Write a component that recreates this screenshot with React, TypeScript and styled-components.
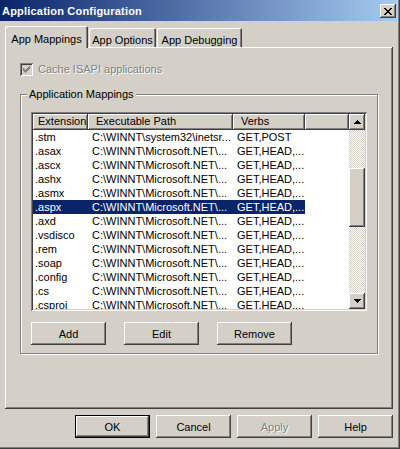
import React from "react";
import styled, { createGlobalStyle, css } from "styled-components";

const GlobalStyle = createGlobalStyle`
  html, body { margin: 0; padding: 0; background: #d4d0c8; }
  body { font-family: "Liberation Sans", Arial, sans-serif; font-size: 11px; color: #000; }
  * { box-sizing: border-box; }
`;

const raised = css`
  box-shadow: inset -1px -1px #404040, inset 1px 1px #fff, inset -2px -2px #808080;
`;

const sunken = css`
  box-shadow: inset 1px 1px #808080, inset -1px -1px #fff, inset 2px 2px #404040,
    inset -2px -2px #d4d0c8;
`;

const Window = styled.div`
  width: 400px;
  height: 449px;
  display: flex;
  flex-direction: column;
  background: #d4d0c8;
  padding-right: 3px;
  box-shadow: inset -1px -1px #404040, inset -2px -2px #808080;
`;

const TitleBar = styled.div`
  height: 21px;
  flex: none;
  display: flex;
  justify-content: space-between;
  align-items: flex-start;
  padding: 4px 1px 0 2px;
  background: linear-gradient(to right, #0a246a, #a6caf0);
`;

const TitleText = styled.span`
  color: #fff;
  font-weight: bold;
  font-size: 11px;
  line-height: 13px;
  letter-spacing: 0.2px;
  margin-top: 1px;
`;

const CloseButton = styled.div`
  width: 16px;
  height: 14px;
  display: flex;
  align-items: center;
  justify-content: center;
  background: #d4d0c8;
  ${raised}
`;

const Body = styled.div`
  flex: 1;
  display: flex;
  flex-direction: column;
  padding: 0 4px 0 5px;
`;

const TabStrip = styled.div`
  margin-top: 5px;
  height: 21px;
  display: flex;
  align-items: flex-end;
`;

const Tab = styled.div<{ $active?: boolean; $w: number }>`
  position: relative;
  z-index: ${(p) => (p.$active ? 2 : 1)};
  width: ${(p) => p.$w}px;
  height: ${(p) => (p.$active ? 22 : 19)}px;
  margin-bottom: ${(p) => (p.$active ? -1 : 0)}px;
  margin-left: ${(p) => (p.$active ? 0 : 1)}px;
  padding-top: ${(p) => (p.$active ? 7 : 6)}px;
  line-height: 13px;
  text-align: center;
  white-space: nowrap;
  background: #d4d0c8;
  border-radius: 2px 2px 0 0;
  box-shadow: inset 1px 1px #fff, inset -1px 0 #404040, inset -2px 0 #808080;
`;

const Panel = styled.div`
  flex: 1;
  display: flex;
  flex-direction: column;
  padding: 16px 15px 0 15px;
  ${raised}
`;

const CheckRow = styled.div`
  display: flex;
  align-items: center;
  gap: 5px;
  height: 13px;
`;

const CheckBox = styled.div`
  width: 13px;
  height: 13px;
  display: flex;
  align-items: center;
  justify-content: center;
  background: #d4d0c8;
  ${sunken}
`;

const DisabledText = styled.span`
  color: #808080;
  text-shadow: 1px 1px #fff;
  line-height: 13px;
`;

const GroupBox = styled.fieldset`
  margin: 12px 0 0 0;
  padding: 11px 10px 8px 10px;
  min-width: 0;
  border: 1px solid #808080;
  box-shadow: 1px 1px 0 #fff, inset 1px 1px 0 #fff;
`;

const GroupLabel = styled.legend`
  margin-left: -4px;
  padding: 0 2px;
  line-height: 13px;
  background: #d4d0c8;
`;

const ListView = styled.div`
  height: 199px;
  display: flex;
  padding: 2px;
  background: #fff;
  ${sunken}
`;

const TableArea = styled.div`
  flex: 1;
  min-width: 0;
  overflow: hidden;
  display: flex;
  flex-direction: column;
`;

const HeaderRow = styled.div`
  display: flex;
  height: 16px;
  flex: none;
`;

const HeaderCell = styled.div<{ $w?: number }>`
  ${(p) => (p.$w ? `width: ${p.$w}px; flex: none;` : "flex: 1;")}
  height: 16px;
  padding-left: ${(p) => (p.$w === 55 ? 5 : 8)}px;
  line-height: 15px;
  white-space: nowrap;
  overflow: hidden;
  background: #d4d0c8;
  ${raised}
`;

const Row = styled.div<{ $selected?: boolean }>`
  display: flex;
  width: 272px;
  height: 14px;
  flex: none;
  line-height: 14px;
  background: ${(p) => (p.$selected ? "#0a246a" : "transparent")};
  color: ${(p) => (p.$selected ? "#fff" : "#000")};
`;

const Cell = styled.div<{ $w: number; $first?: boolean }>`
  width: ${(p) => p.$w}px;
  flex: none;
  padding-left: ${(p) => (p.$first ? 2 : 4)}px;
  white-space: nowrap;
  overflow: hidden;
`;

const ScrollBar = styled.div`
  width: 16px;
  flex: none;
  display: flex;
  flex-direction: column;
`;

const ScrollButton = styled.div`
  width: 16px;
  height: 16px;
  flex: none;
  display: flex;
  align-items: center;
  justify-content: center;
  background: #d4d0c8;
  ${raised}
`;

const Track = styled.div`
  flex: 1;
  display: flex;
  flex-direction: column;
  background: repeating-conic-gradient(#d4d0c8 0% 25%, #fff 0% 50%) 0 0 / 2px 2px;
`;

const ThumbSpacer = styled.div<{ $h: number }>`
  height: ${(p) => p.$h}px;
  flex: none;
`;

const Thumb = styled.div<{ $h: number }>`
  height: ${(p) => p.$h}px;
  flex: none;
  background: #d4d0c8;
  ${raised}
`;

const ButtonRow = styled.div<{ $end?: boolean; $top?: number }>`
  display: flex;
  justify-content: ${(p) => (p.$end ? "flex-end" : "flex-start")};
  gap: ${(p) => (p.$end ? 6 : 18)}px;
  margin-top: ${(p) => p.$top ?? 0}px;
`;

const Button = styled.div<{ $default?: boolean; $disabled?: boolean }>`
  width: 75px;
  height: 23px;
  display: flex;
  align-items: center;
  justify-content: center;
  background: #d4d0c8;
  color: ${(p) => (p.$disabled ? "#808080" : "#000")};
  text-shadow: ${(p) => (p.$disabled ? "1px 1px #fff" : "none")};
  ${(p) =>
    p.$default
      ? css`
          box-shadow: inset 0 0 0 1px #000, inset -2px -2px #404040, inset 2px 2px #fff,
            inset -3px -3px #808080;
        `
      : raised}
`;

const Footer = styled.div`
  margin: 6px 0 11px 0;
  flex: none;
`;

const UpArrow = () => (
  <svg width="7" height="4" viewBox="0 0 7 4" shapeRendering="crispEdges">
    <path d="M3 0h1v1h-1z M2 1h3v1h-3z M1 2h5v1h-5z M0 3h7v1h-7z" fill="#000" />
  </svg>
);

const DownArrow = () => (
  <svg width="7" height="4" viewBox="0 0 7 4" shapeRendering="crispEdges">
    <path d="M0 0h7v1h-7z M1 1h5v1h-5z M2 2h3v1h-3z M3 3h1v1h-1z" fill="#000" />
  </svg>
);

const CloseGlyph = () => (
  <svg width="8" height="7" viewBox="0 0 8 7" shapeRendering="crispEdges">
    <path
      d="M0 0h2v1h-2z M6 0h2v1h-2z M1 1h2v1h-2z M5 1h2v1h-2z M2 2h4v1h-4z M3 3h2v1h-2z M2 4h4v1h-4z M1 5h2v1h-2z M5 5h2v1h-2z M0 6h2v1h-2z M6 6h2v1h-2z"
      fill="#000"
    />
  </svg>
);

const CheckGlyph = () => (
  <svg width="7" height="7" viewBox="0 0 7 7" shapeRendering="crispEdges">
    <path
      d="M6 0h1v1h-1z M5 1h2v1h-2z M0 2h1v1h-1z M4 2h3v1h-3z M0 3h2v1h-2z M3 3h3v1h-3z M0 4h5v1h-5z M1 5h3v1h-3z M2 6h1v1h-1z"
      fill="#808080"
    />
  </svg>
);

const NET = "C:\\WINNT\\Microsoft.NET\\...";
const HV = "GET,HEAD,...";

const rows: { ext: string; path: string; verbs: string; selected?: boolean }[] = [
  { ext: ".stm", path: "C:\\WINNT\\system32\\inetsr...", verbs: "GET,POST" },
  { ext: ".asax", path: NET, verbs: HV },
  { ext: ".ascx", path: NET, verbs: HV },
  { ext: ".ashx", path: NET, verbs: HV },
  { ext: ".asmx", path: NET, verbs: HV },
  { ext: ".aspx", path: NET, verbs: HV, selected: true },
  { ext: ".axd", path: NET, verbs: HV },
  { ext: ".vsdisco", path: NET, verbs: HV },
  { ext: ".rem", path: NET, verbs: HV },
  { ext: ".soap", path: NET, verbs: HV },
  { ext: ".config", path: NET, verbs: HV },
  { ext: ".cs", path: NET, verbs: HV },
  { ext: ".csproj", path: NET, verbs: HV },
];

export default function App() {
  return (
    <>
      <GlobalStyle />
      <Window>
        <TitleBar>
          <TitleText>Application Configuration</TitleText>
          <CloseButton>
            <CloseGlyph />
          </CloseButton>
        </TitleBar>
        <Body>
          <TabStrip>
            <Tab $active $w={83}>App Mappings</Tab>
            <Tab $w={67}>App Options</Tab>
            <Tab $w={85}>App Debugging</Tab>
          </TabStrip>
          <Panel>
            <CheckRow>
              <CheckBox>
                <CheckGlyph />
              </CheckBox>
              <DisabledText>Cache ISAPI applications</DisabledText>
            </CheckRow>
            <GroupBox>
              <GroupLabel>Application Mappings</GroupLabel>
              <ListView>
                <TableArea>
                  <HeaderRow>
                    <HeaderCell $w={55}>Extension</HeaderCell>
                    <HeaderCell $w={145}>Executable Path</HeaderCell>
                    <HeaderCell $w={72}>Verbs</HeaderCell>
                    <HeaderCell />
                  </HeaderRow>
                  {rows.map((r) => (
                    <Row key={r.ext} $selected={r.selected}>
                      <Cell $w={55} $first>
                        {r.ext}
                      </Cell>
                      <Cell $w={145}>{r.path}</Cell>
                      <Cell $w={72}>{r.verbs}</Cell>
                    </Row>
                  ))}
                </TableArea>
                <ScrollBar>
                  <ScrollButton>
                    <UpArrow />
                  </ScrollButton>
                  <Track>
                    <ThumbSpacer $h={38} />
                    <Thumb $h={59} />
                  </Track>
                  <ScrollButton>
                    <DownArrow />
                  </ScrollButton>
                </ScrollBar>
              </ListView>
              <ButtonRow $top={11}>
                <Button>Add</Button>
                <Button>Edit</Button>
                <Button>Remove</Button>
              </ButtonRow>
            </GroupBox>
          </Panel>
          <Footer>
            <ButtonRow $end>
              <Button $default>OK</Button>
              <Button>Cancel</Button>
              <Button $disabled>Apply</Button>
              <Button>Help</Button>
            </ButtonRow>
          </Footer>
        </Body>
      </Window>
    </>
  );
}
